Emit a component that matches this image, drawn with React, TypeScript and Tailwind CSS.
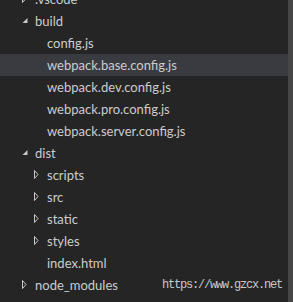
import React from "react";

type Row = { name: string; depth: number; kind: "open" | "closed" | "file"; selected?: boolean };

const rows: Row[] = [
  { name: ".vscode", depth: 0, kind: "closed" },
  { name: "build", depth: 0, kind: "open" },
  { name: "config.js", depth: 1, kind: "file" },
  { name: "webpack.base.config.js", depth: 1, kind: "file", selected: true },
  { name: "webpack.dev.config.js", depth: 1, kind: "file" },
  { name: "webpack.pro.config.js", depth: 1, kind: "file" },
  { name: "webpack.server.config.js", depth: 1, kind: "file" },
  { name: "dist", depth: 0, kind: "open" },
  { name: "scripts", depth: 1, kind: "closed" },
  { name: "src", depth: 1, kind: "closed" },
  { name: "static", depth: 1, kind: "closed" },
  { name: "styles", depth: 1, kind: "closed" },
  { name: "index.html", depth: 1, kind: "file" },
  { name: "node_modules", depth: 0, kind: "closed" },
];

function Twisty({ kind }: { kind: Row["kind"] }) {
  if (kind === "open") {
    return (
      <svg width="13" height="22" viewBox="0 0 13 22" className="shrink-0">
        <polygon points="5.5,8 5.5,13 0.5,13" fill="#c8c8c8" />
      </svg>
    );
  }
  if (kind === "closed") {
    return (
      <svg width="13" height="22" viewBox="0 0 13 22" className="shrink-0">
        <polygon points="0.5,6.5 4,10.5 0.5,14.5" fill="none" stroke="#c8c8c8" strokeWidth="1" />
      </svg>
    );
  }
  return <span className="w-[13px] shrink-0" />;
}

export default function App() {
  return (
    <div className="relative w-[293px] h-[302px] overflow-hidden bg-[#252526] flex">
      <div className="flex-1 flex flex-col -mt-[12px]" style={{ fontFamily: 'Lato, "Noto Sans", sans-serif' }}>
        {rows.map((r) => (
          <div
            key={r.name}
            className={`flex items-center h-[22px] text-[13px] text-[#cccccc] whitespace-nowrap ${r.selected ? "bg-[#3a3b40]" : ""} ${r.depth === 1 ? "pl-[34px]" : "pl-[22px]"}`}
          >
            <Twisty kind={r.kind} />
            <span className="leading-[22px]">{r.name}</span>
          </div>
        ))}
      </div>
      <div className="w-[5px] h-full bg-[#464646]" />
      <div
        className="absolute left-[162px] top-[278px] text-[12px] leading-[14px] text-[#c8c8c8] tracking-[-1.2px]"
        style={{ fontFamily: '"Liberation Mono", monospace' }}
      >
        https://www.gzcx.net
      </div>
    </div>
  );
}
